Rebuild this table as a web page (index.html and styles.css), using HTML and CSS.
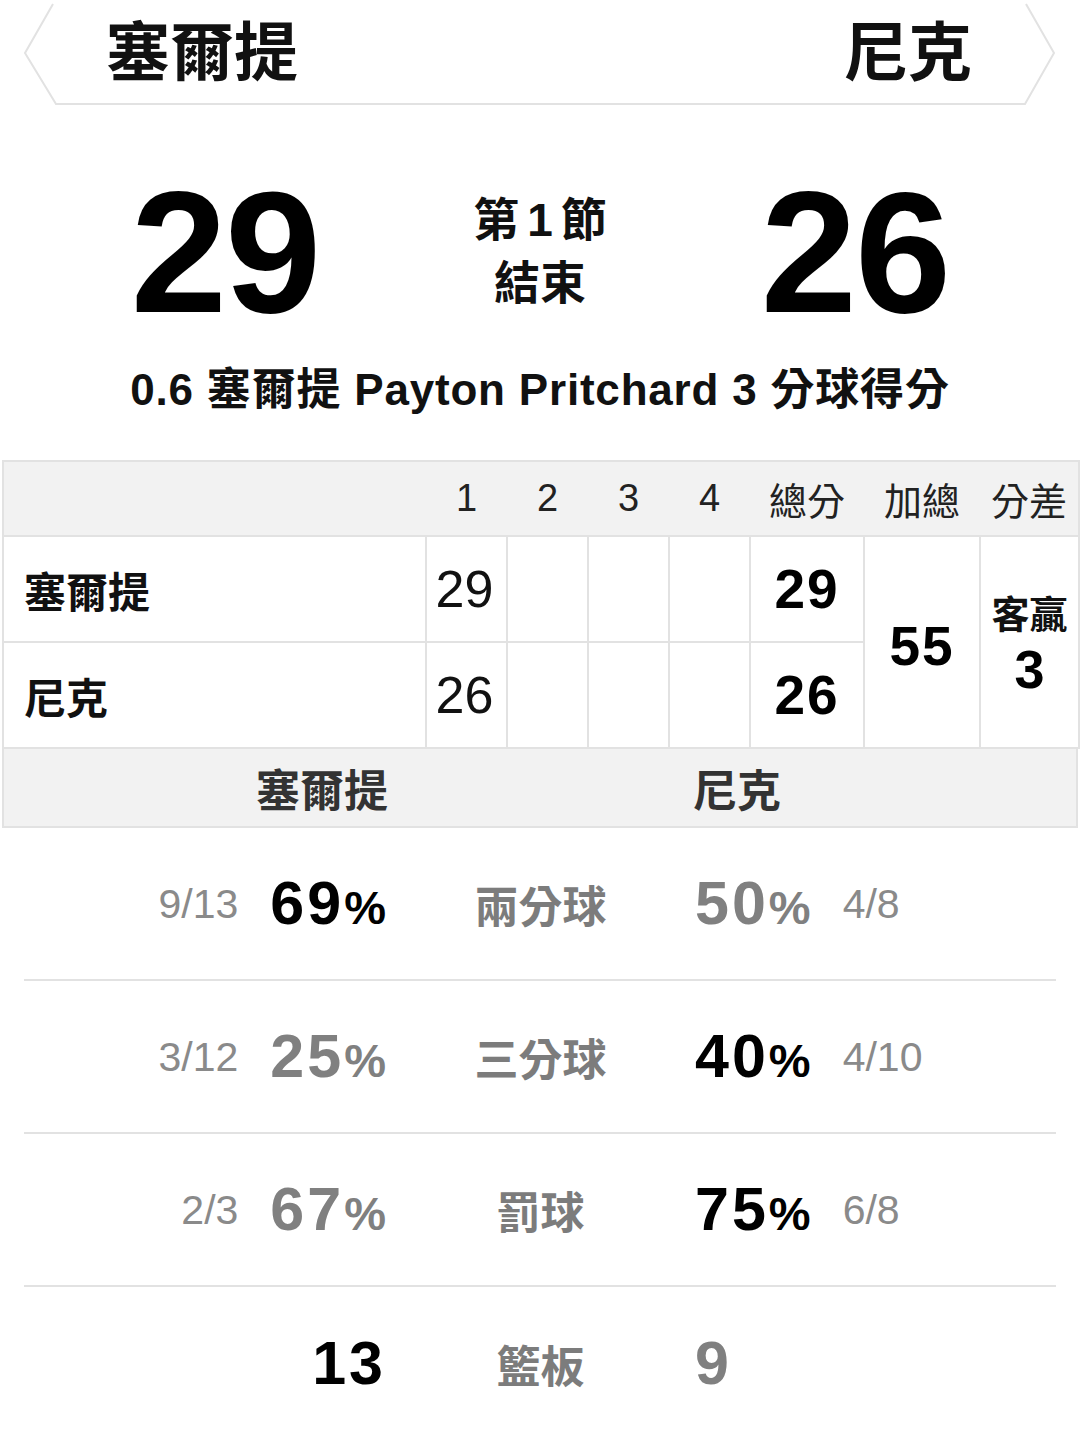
FILE: index.html
```html
<!DOCTYPE html>
<html lang="zh-Hant">
<head>
<meta charset="utf-8">
<title>塞爾提 vs 尼克</title>
<link rel="stylesheet" href="styles.css">
</head>
<body>
<div class="page">
  <header class="teams">
    <svg class="tab-frame" width="1080" height="106" viewBox="0 0 1080 106">
      <path d="M53 4 L25 53 L56 104 L1025 104 L1054 53 L1026 4" fill="none" stroke="#e2e2e2" stroke-width="2"/>
    </svg>
    <span class="team-name">塞爾提</span>
    <span class="team-name">尼克</span>
  </header>

  <section class="scoreboard">
    <div class="big-score">29</div>
    <div class="period">第<span class="period-num">1</span>節<br>結束</div>
    <div class="big-score">26</div>
  </section>

  <p class="play">0.6 塞爾提 Payton Pritchard 3 分球得分</p>

  <table class="linescore">
    <colgroup>
      <col class="c-name"><col class="c-q"><col class="c-q"><col class="c-q"><col class="c-q"><col class="c-tot"><col class="c-sum"><col class="c-diff">
    </colgroup>
    <thead>
      <tr>
        <th></th><th>1</th><th>2</th><th>3</th><th>4</th><th>總分</th><th>加總</th><th>分差</th>
      </tr>
    </thead>
    <tbody>
      <tr>
        <td class="name">塞爾提</td>
        <td class="q">29</td><td class="q"></td><td class="q"></td><td class="q"></td>
        <td class="tot">29</td>
        <td class="sum" rowspan="2">55</td>
        <td class="diff" rowspan="2"><span class="diff-label">客贏</span><span class="diff-num">3</span></td>
      </tr>
      <tr>
        <td class="name">尼克</td>
        <td class="q">26</td><td class="q"></td><td class="q"></td><td class="q"></td>
        <td class="tot">26</td>
      </tr>
    </tbody>
  </table>

  <div class="compare-head">
    <span class="ch-left">塞爾提</span>
    <span></span>
    <span class="ch-right">尼克</span>
  </div>

  <div class="stats">
    <div class="stat-row">
      <div class="side left"><span class="frac">9/13</span><span class="pct win">69<small>%</small></span></div>
      <div class="label">兩分球</div>
      <div class="side right"><span class="pct">50<small>%</small></span><span class="frac">4/8</span></div>
    </div>
    <div class="stat-row">
      <div class="side left"><span class="frac">3/12</span><span class="pct">25<small>%</small></span></div>
      <div class="label">三分球</div>
      <div class="side right"><span class="pct win">40<small>%</small></span><span class="frac">4/10</span></div>
    </div>
    <div class="stat-row">
      <div class="side left"><span class="frac">2/3</span><span class="pct">67<small>%</small></span></div>
      <div class="label">罰球</div>
      <div class="side right"><span class="pct win">75<small>%</small></span><span class="frac">6/8</span></div>
    </div>
    <div class="stat-row last">
      <div class="side left"><span class="pct win">13</span></div>
      <div class="label">籃板</div>
      <div class="side right"><span class="pct">9</span></div>
    </div>
  </div>
</div>
</body>
</html>
```

FILE: styles.css
```css
* { box-sizing: border-box; }

html, body {
  margin: 0;
  padding: 0;
  background: #ffffff;
}

body {
  font-family: "Liberation Sans", "Noto Sans CJK TC", sans-serif;
  color: #111111;
  width: 1080px;
}

.page {
  width: 1080px;
}

/* ---------- header tab ---------- */
.teams {
  position: relative;
  height: 106px;
  display: flex;
  justify-content: space-between;
  align-items: center;
  padding: 0 108px 0 106px;
}

.tab-frame {
  position: absolute;
  left: 0;
  top: 0;
}

.team-name {
  position: relative;
  font-size: 64px;
  font-weight: 700;
  line-height: 1;
  color: #111111;
}

/* ---------- scoreboard ---------- */
.scoreboard {
  display: grid;
  grid-template-columns: 290px 1fr 290px;
  padding: 0 80px;
  margin-top: 46px;
  height: 200px;
  align-items: center;
}

.big-score {
  font-size: 173px;
  font-weight: 700;
  line-height: 200px;
  letter-spacing: -2px;
  text-align: center;
  color: #000000;
}

.period {
  text-align: center;
  font-size: 46px;
  font-weight: 700;
  line-height: 63px;
  color: #111111;
}

.period-num {
  margin: 0 8px;
}

/* ---------- play text ---------- */
.play {
  margin: 13px 0 0;
  height: 50px;
  line-height: 50px;
  text-align: center;
  font-size: 44px;
  font-weight: 700;
  letter-spacing: 0.8px;
  color: #111111;
}

/* ---------- line score table ---------- */
.linescore {
  margin: 45px 0 0 2px;
  width: 1076px;
  table-layout: fixed;
  border-collapse: collapse;
  border: 2px solid #e2e2e2;
}

.c-name { width: 423px; }
.c-q { width: 81px; }
.c-tot { width: 114px; }
.c-sum { width: 116px; }
.c-diff { width: 99px; }

.linescore thead tr {
  background: #f2f2f2;
  height: 75px;
  border-bottom: 2px solid #e2e2e2;
}

.linescore th {
  font-size: 38px;
  font-weight: 400;
  color: #222222;
  text-align: center;
  padding: 0;
}

.linescore tbody tr {
  height: 106px;
}

.linescore td {
  border: 2px solid #e2e2e2;
  padding: 0;
  text-align: center;
  vertical-align: middle;
}

.linescore td.name {
  text-align: left;
  padding-left: 20px;
  font-size: 42px;
  font-weight: 700;
  color: #111111;
}

.linescore td.q {
  font-size: 52px;
  font-weight: 400;
  color: #111111;
  padding-right: 4px;
}

.linescore td.tot,
.linescore td.sum {
  font-size: 55px;
  font-weight: 700;
  letter-spacing: 2px;
  color: #000000;
}

.linescore td.sum {
  padding-top: 8px;
}

.linescore td.diff {
  line-height: 1;
  padding-top: 8px;
}

.diff-label {
  display: block;
  font-size: 38px;
  font-weight: 700;
  color: #111111;
  margin-bottom: 8px;
}

.diff-num {
  display: block;
  font-size: 54px;
  font-weight: 700;
  color: #000000;
}

/* ---------- compare header ---------- */
.compare-head {
  display: grid;
  grid-template-columns: 360px 305px 1fr;
  padding: 0 24px;
  height: 79px;
  align-items: center;
  background: #f2f2f2;
  margin: 0 2px;
  border: 2px solid #e2e2e2;
  border-top: none;
  font-size: 44px;
  font-weight: 700;
  color: #333333;
}

.ch-left { text-align: right; }
.ch-right { text-align: left; }

/* ---------- stats ---------- */
.stats {
  padding: 0 24px;
}

.stat-row {
  display: grid;
  grid-template-columns: 362px 309px 1fr;
  align-items: center;
  height: 153px;
  border-bottom: 2px solid #e2e2e2;
}

.stat-row.last {
  border-bottom: none;
}

.side {
  display: flex;
  align-items: center;
  gap: 32px;
}

.side.left { justify-content: flex-end; }
.side.right { justify-content: flex-start; }

.frac {
  font-size: 41px;
  font-weight: 400;
  color: #8a8a8a;
  padding-top: 2px;
}

.pct {
  font-size: 61px;
  font-weight: 700;
  color: #808080;
  letter-spacing: 3px;
  line-height: 1;
}

.pct small {
  font-size: 47px;
  font-weight: 700;
  letter-spacing: 0;
}

.pct.win {
  color: #000000;
}

.label {
  text-align: center;
  font-size: 44px;
  font-weight: 700;
  color: #7c7c7c;
}
```
